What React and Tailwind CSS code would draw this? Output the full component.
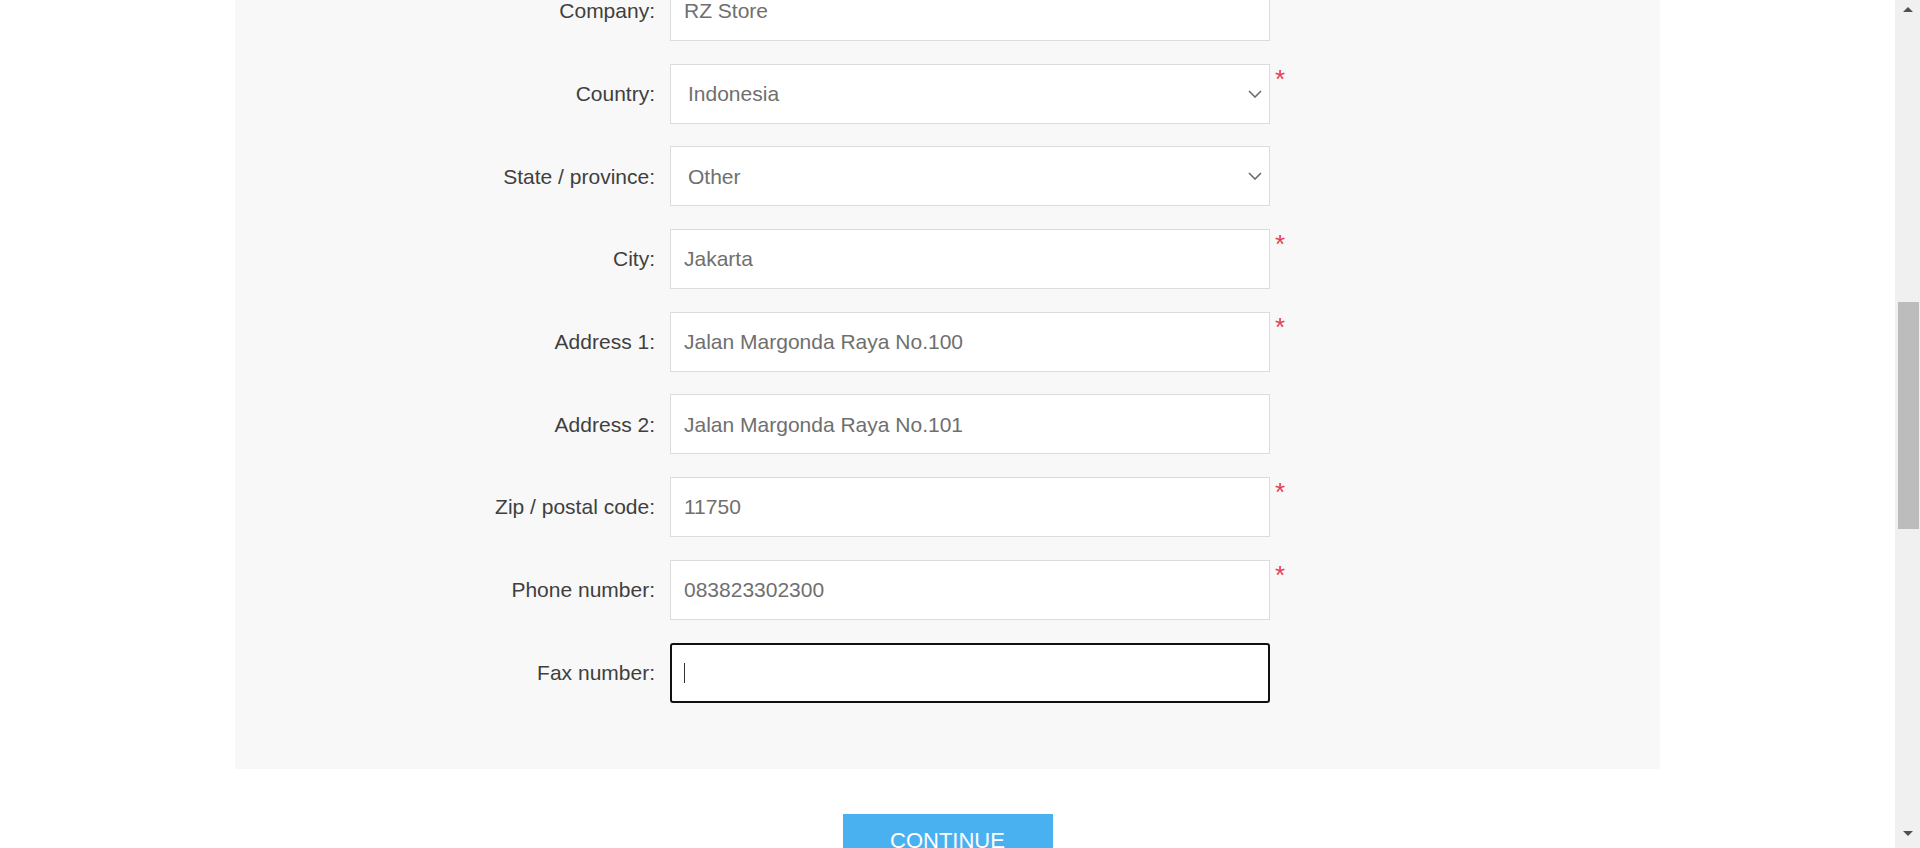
import { useState } from 'react'

const ROWS = [
  { label: 'Company:', value: 'RZ Store' },
  { label: 'Country:', value: 'Indonesia', select: true, required: true },
  { label: 'State / province:', value: 'Other', select: true },
  { label: 'City:', value: 'Jakarta', required: true },
  { label: 'Address 1:', value: 'Jalan Margonda Raya No.100', required: true },
  { label: 'Address 2:', value: 'Jalan Margonda Raya No.101' },
  { label: 'Zip / postal code:', value: '11750', required: true },
  { label: 'Phone number:', value: '083823302300', required: true },
  { label: 'Fax number:', value: '', focused: true },
]

function Chevron() {
  return (
    <svg width="14" height="8" viewBox="0 0 14 8" className="shrink-0" aria-hidden="true">
      <path d="M1 1l6 6 6-6" fill="none" stroke="#6b6b6b" strokeWidth="1.6" />
    </svg>
  )
}

function Field({ row }) {
  if (row.focused) {
    return (
      <div className="w-[600px] h-[60px] bg-white border-2 border-[#111] rounded-[3px] flex items-center pl-[12px]">
        <span className="w-px h-[20px] bg-[#333]" />
      </div>
    )
  }
  return (
    <div
      className={`w-[600px] h-[60px] bg-white border border-[#dcdcdc] flex items-center ${
        row.select ? 'pl-[17px] pr-[7px]' : 'pl-[13px] pr-[13px]'
      }`}
    >
      <span className="flex-1 text-[#6f6f6f] truncate">{row.value}</span>
      {row.select && <Chevron />}
    </div>
  )
}

function Scrollbar() {
  return (
    <div className="w-[25px] h-[848px] bg-[#f0f0f0] flex flex-col items-center shrink-0">
      <div className="h-[12px] flex items-end justify-center">
        <div className="w-0 h-0 border-l-[5px] border-r-[5px] border-b-[5px] border-l-transparent border-r-transparent border-b-[#505050]" />
      </div>
      <div className="h-[290px]" />
      <div className="w-[21px] h-[227px] bg-[#bcbcbc] ml-[2px]" />
      <div className="flex-1" />
      <div className="h-[17px] flex items-start justify-center">
        <div className="w-0 h-0 border-l-[5px] border-r-[5px] border-t-[5px] border-l-transparent border-r-transparent border-t-[#505050]" />
      </div>
    </div>
  )
}

export default function App() {
  const [rows] = useState(ROWS)
  return (
    <div className="w-[1920px] h-[848px] flex bg-white overflow-hidden font-['Liberation_Sans',Arial,sans-serif] text-[21px]">
      <div className="flex-1 h-[848px] overflow-hidden">
        <div className="mt-[-19px] mx-[235px] bg-[#f8f8f8] pb-[66px]">
          {rows.map((row, i) => (
            <div key={row.label} className={`flex items-start ${i < rows.length - 1 ? 'mb-[22.7px]' : ''}`}>
              <div className="w-[435px] h-[60px] pr-[15px] flex items-center justify-end text-[#3f3f3f] whitespace-nowrap">
                {row.label}
              </div>
              <Field row={row} />
              {row.required && (
                <span className="ml-[5px] mt-[2px] text-[#e5414b] text-[26px] leading-none">*</span>
              )}
            </div>
          ))}
        </div>
        <div className="flex justify-center mt-[45px]">
          <button className="w-[210px] h-[60px] bg-[#4ab1f1] text-white text-[22px] uppercase flex items-start justify-center pt-[10px]">
            Continue
          </button>
        </div>
      </div>
      <Scrollbar />
    </div>
  )
}
